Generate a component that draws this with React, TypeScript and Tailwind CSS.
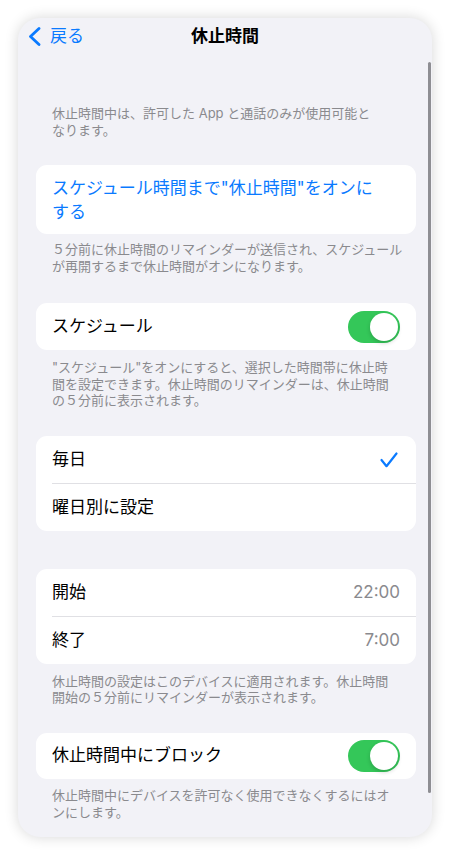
import React from "react";

function Toggle() {
  return (
    <div className="relative w-[52px] h-[32px] rounded-full bg-[#34c759]">
      <div className="absolute right-[2px] top-[2px] w-[28px] h-[28px] rounded-full bg-white shadow-[0_2px_4px_rgba(0,0,0,0.18)]" />
    </div>
  );
}

function Footer({ lines, mt }: { lines: string[]; mt: string }) {
  return (
    <div className={`${mt} px-4 text-[13px] leading-[16.5px] text-[#8a8a8e] whitespace-nowrap`}>
      {lines.map((l) => (
        <div key={l}>{l}</div>
      ))}
    </div>
  );
}

export default function App() {
  return (
    <div className="w-[451px] h-[855px] bg-white pt-[18px] pl-[18px] font-['Inter','Noto_Sans_CJK_JP',sans-serif]">
      <div className="relative w-[414px] h-[819px] rounded-[22px] bg-[#f2f2f7] overflow-hidden shadow-[0_0_14px_rgba(0,0,0,0.16)]">
        {/* nav bar */}
        <div className="grid grid-cols-[1fr_auto_1fr] items-center h-[37px]">
          <div className="flex items-center gap-[9px] pl-[10px] text-[#0a7aff] text-[17px]">
            <svg width="13" height="19" viewBox="0 0 13 19" fill="none">
              <path d="M11 1.5 L2.5 9.5 L11 17.5" stroke="#0a7aff" strokeWidth="2.8" strokeLinecap="round" strokeLinejoin="round" />
            </svg>
            <span>戻る</span>
          </div>
          <div className="text-[17px] font-bold text-black">休止時間</div>
          <div />
        </div>

        <div className="pl-[18px] pr-[16px]">
          <Footer mt="mt-[50px]" lines={["休止時間中は、許可した App と通話のみが使用可能と", "なります。"]} />

          <div className="mt-[27px] rounded-[11px] bg-white px-4 pt-[11px] pb-[10px] text-[17px] leading-[24px] text-[#0a7aff]">
            <div>スケジュール時間まで"休止時間"をオンに</div>
            <div>する</div>
          </div>
          <Footer mt="mt-[7px]" lines={["５分前に休止時間のリマインダーが送信され、スケジュール", "が再開するまで休止時間がオンになります。"]} />

          <div className="mt-[29px] h-[47px] rounded-[11px] bg-white px-4 flex items-center justify-between">
            <span className="text-[17px] text-black">スケジュール</span>
            <Toggle />
          </div>
          <Footer
            mt="mt-[9px]"
            lines={["\"スケジュール\"をオンにすると、選択した時間帯に休止時", "間を設定できます。休止時間のリマインダーは、休止時間", "の５分前に表示されます。"]}
          />

          <div className="mt-[27.5px] rounded-[11px] bg-white">
            <div className="h-[47px] pl-4 pr-[18px] flex items-center justify-between">
              <span className="text-[17px] text-black">毎日</span>
              <svg width="18" height="16" viewBox="0 0 18 16" fill="none">
                <path d="M1.5 8 L6.5 14.2 L16.5 1.5" stroke="#0a7aff" strokeWidth="2.2" strokeLinecap="round" strokeLinejoin="round" />
              </svg>
            </div>
            <div className="ml-4 h-px bg-[#e0e0e4]" />
            <div className="h-[47px] px-4 flex items-center">
              <span className="text-[17px] text-black">曜日別に設定</span>
            </div>
          </div>

          <div className="mt-[38px] rounded-[11px] bg-white">
            <div className="h-[47px] px-4 flex items-center justify-between text-[17px]">
              <span className="text-black">開始</span>
              <span className="text-[#8a8a8e]">22:00</span>
            </div>
            <div className="ml-4 h-px bg-[#e0e0e4]" />
            <div className="h-[47px] px-4 flex items-center justify-between text-[17px]">
              <span className="text-black">終了</span>
              <span className="text-[#8a8a8e]">7:00</span>
            </div>
          </div>
          <Footer mt="mt-[8.5px]" lines={["休止時間の設定はこのデバイスに適用されます。休止時間", "開始の５分前にリマインダーが表示されます。"]} />

          <div className="mt-[27.5px] h-[46px] rounded-[11px] bg-white px-4 flex items-center justify-between">
            <span className="text-[17px] text-black">休止時間中にブロック</span>
            <Toggle />
          </div>
          <Footer mt="mt-[8px]" lines={["休止時間中にデバイスを許可なく使用できなくするにはオ", "ンにします。"]} />
        </div>

        {/* scroll indicator */}
        <div className="absolute left-[410px] top-[44px] w-[3px] h-[731px] rounded-full bg-[#8e8e93]" />
      </div>
    </div>
  );
}
